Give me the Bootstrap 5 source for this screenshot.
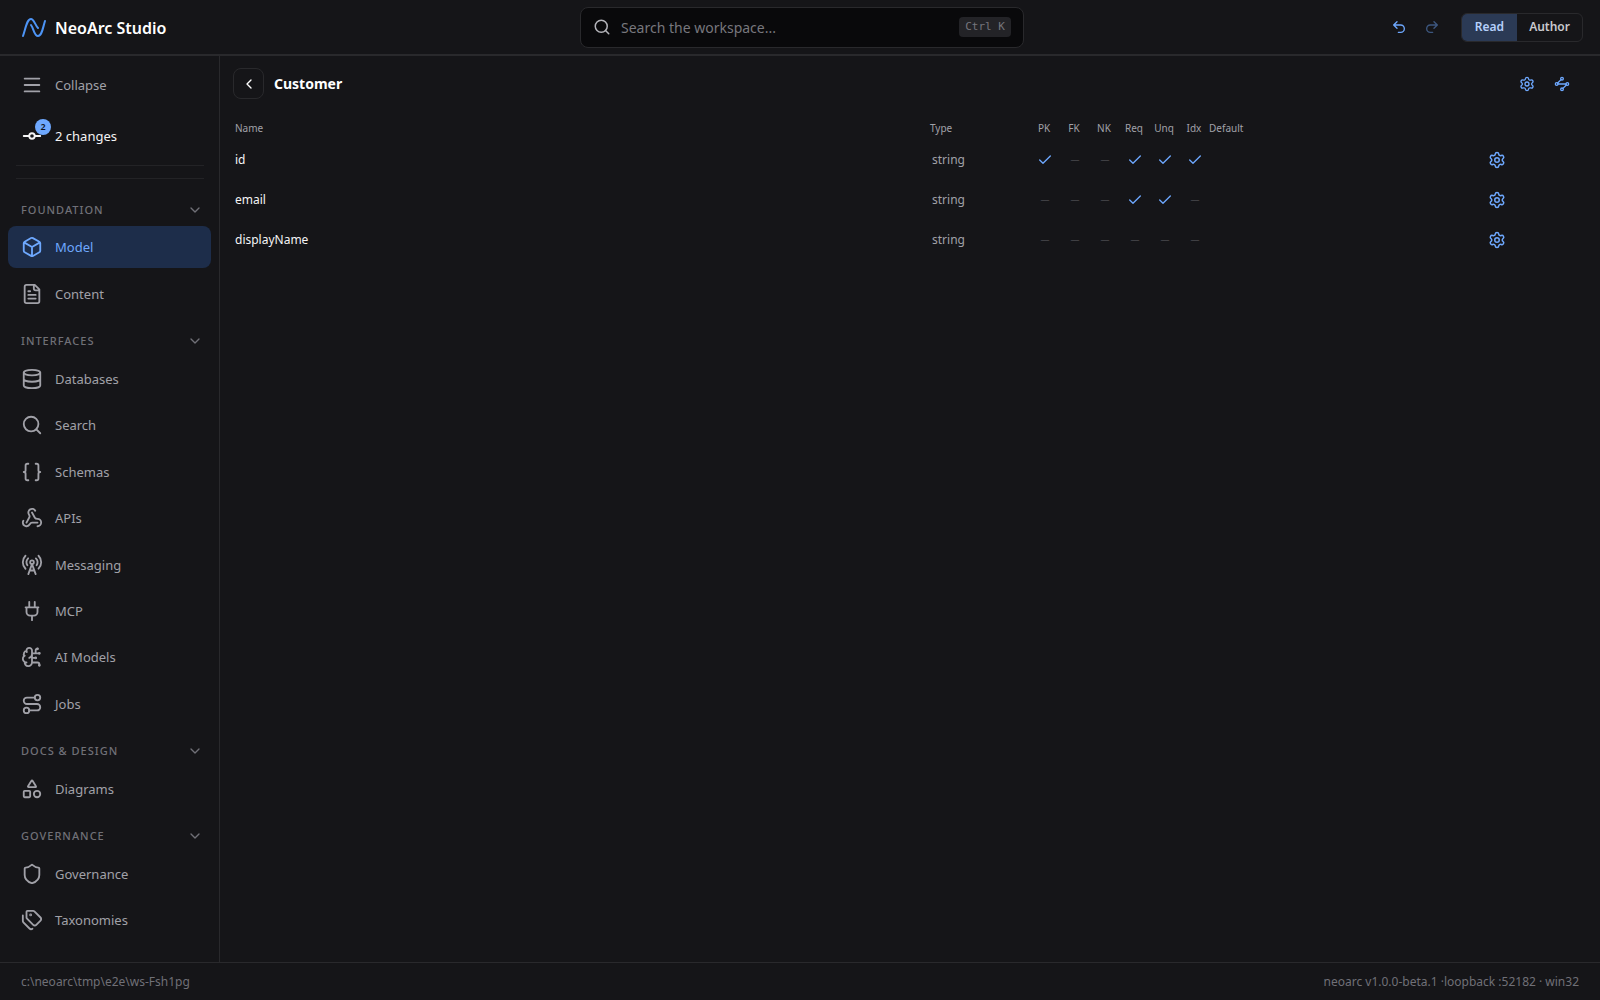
<!DOCTYPE html>
<html lang="en" data-bs-theme="dark">
<head>
<meta charset="utf-8">
<meta name="viewport" content="width=device-width, initial-scale=1">
<title>NeoArc Studio</title>
<link href="https://cdn.jsdelivr.net/npm/bootstrap@5.3.0/dist/css/bootstrap.min.css" rel="stylesheet">
<style>
:root{--ink:#f4f4f5;--muted:#a1a1a8;--dim:#707077;--line:#29292c;--accent:#6ea8fe;--panel:#151518}
body{font-family:"Noto Sans","Open Sans",sans-serif;font-size:13px;line-height:18px;background:var(--panel);color:var(--ink)}
svg{fill:none;stroke:currentColor;stroke-width:2;stroke-linecap:round;stroke-linejoin:round;flex:none;display:block}
.i22{width:22px;height:22px}.i18{width:18px;height:18px}.i16{width:16px;height:16px}
.logo{color:#4d94f5}
.topbar{height:56px;border-bottom:2px solid var(--line);padding:0 17px 0 21px;display:grid;grid-template-columns:1fr 444px 1fr}
.brand-name{font-size:16px;line-height:22px;padding-top:2px;font-weight:600;color:#fff}
.searchbox{height:41px;background:#09090b;border:1px solid var(--line);border-radius:8px;padding:0 12px;color:#b4b4ba}
.searchbox input{background:none;border:0;outline:0;min-width:0;color:var(--ink);font-size:14px;padding:2px 0 0;margin-left:10px}
.searchbox input::placeholder{color:#77777d;opacity:1}
.keys{font:11px/20px "DejaVu Sans Mono",monospace;background:#232327;color:#75757c;border-radius:4px;padding:0 6px}
.tool{background:none;border:0;padding:0;color:var(--accent)}
.tool:disabled{opacity:.45}
.history{gap:17px;margin-right:21px}
.pagetools{gap:19px;margin-right:18px}
.modes{border:1px solid var(--line);border-radius:6px;overflow:hidden;height:29px}
.modes button{border:0;background:none;font-size:12px;font-weight:600;color:#c9c9ce;padding:0 12px}
.modes button.on{background:#2b3a55;color:#b5d0fb;padding:0 13px}
.side{width:220px;border-right:1px solid var(--line);padding:8px 8px 21px}
.side-item{height:42px;width:100%;border:0;background:none;border-radius:8px;padding:0 13px;display:flex;align-items:center;gap:12px;color:var(--muted);text-decoration:none}
.side-item.on{background:#1d2d4a;color:var(--accent)}
.side-item.changed{color:var(--ink);margin-top:9px}
.side-head{height:34px;width:100%;border:0;background:none;padding:13px 8px 3px 13px;color:var(--dim);font-size:11px;line-height:18px;letter-spacing:1px;font-weight:500}
.rules{height:14px;margin:8px 7px 9px 8px;border:solid #232326;border-width:1px 0}
.count{position:absolute;top:-6px;right:-8px;width:16px;height:16px;border-radius:8px;background:var(--accent);color:#10131a;font-size:9px;line-height:16px;font-weight:600;text-align:center}
.work{padding:12px 12px 0 13px}
.back{width:31px;height:31px;border:1px solid var(--line);border-radius:8px;background:none;color:#fff}
.work h1{font-size:14px;line-height:20px;font-weight:700;color:#fff;margin:0 0 0 10px}
.fields{table-layout:fixed;width:100%;margin-top:17px}
.fields th{height:24px;font-size:10px;line-height:14px;font-weight:400;color:var(--muted);padding:0 2px}
.fields td{height:40px;padding:0 2px;font-size:12px}
.fields .default{padding:0}
.fields .kind{padding-left:4px;color:var(--muted)}
.fields .flag{text-align:center;padding:0 0 0 2px;color:#606066;font-size:9px}
.fields .flag svg{margin:auto;color:var(--accent)}
.c-type{width:101px}.c-flag{width:30px}.c-default{width:273px}.c-act{width:106px}
.status{height:38px;border-top:1px solid var(--line);padding:0 21px;font-size:12px;color:var(--dim)}
</style>
<script src="https://cdn.jsdelivr.net/npm/bootstrap@5.3.0/dist/js/bootstrap.bundle.min.js"></script>
</head>
<body class="d-flex flex-column min-vh-100">
<svg class="d-none" aria-hidden="true">
<symbol id="gear" viewBox="0 0 24 24"><path d="M9.671 4.136a2.34 2.34 0 0 1 4.659 0 2.34 2.34 0 0 0 3.319 1.915 2.34 2.34 0 0 1 2.33 4.033 2.34 2.34 0 0 0 0 3.831 2.34 2.34 0 0 1-2.33 4.033 2.34 2.34 0 0 0-3.319 1.915 2.34 2.34 0 0 1-4.659 0 2.34 2.34 0 0 0-3.32-1.915 2.34 2.34 0 0 1-2.33-4.033 2.34 2.34 0 0 0 0-3.831A2.34 2.34 0 0 1 6.35 6.051a2.34 2.34 0 0 0 3.319-1.915"/><circle cx="12" cy="12" r="3"/></symbol>
<symbol id="down" viewBox="0 0 24 24"><path d="m6 9 6 6 6-6"/></symbol>
<symbol id="tick" viewBox="0 0 24 24"><path d="M20 6 9 17l-5-5"/></symbol>
<symbol id="lens" viewBox="0 0 24 24"><path d="m21 21-4.300-4.300"/><circle cx="11" cy="11" r="8"/></symbol>
</svg>
<header class="topbar align-items-center">
  <div class="d-flex align-items-center gap-2">
    <svg class="logo" width="26" height="24" viewBox="0 0 26 24"><path d="M2 21C5 12 6 4 10 4c3 0 4 6 7 9M10 10c3 4 3 11 7 11s5-9 7-15"/></svg>
    <span class="brand-name">NeoArc Studio</span>
  </div>
  <label class="searchbox d-flex align-items-center">
    <svg class="i18"><use href="#lens"/></svg>
    <input class="flex-grow-1" type="search" placeholder="Search the workspace..." aria-label="Search the workspace">
    <span class="keys">Ctrl K</span>
  </label>
  <div class="d-flex align-items-center justify-content-end">
    <div class="history d-flex">
      <button class="tool" aria-label="Undo"><svg class="i16" viewBox="0 0 24 24"><path d="M9 14 4 9l5-5M4 9h10.500a5.500 5.500 0 0 1 0 11H11"/></svg></button>
      <button class="tool" aria-label="Redo" disabled><svg class="i16" viewBox="0 0 24 24"><path d="m15 14 5-5-5-5M20 9H9.500a5.500 5.500 0 0 0 0 11H13"/></svg></button>
    </div>
    <div class="modes d-flex" role="group" aria-label="Mode"><button class="on">Read</button><button>Author</button></div>
  </div>
</header>
<div class="d-flex flex-grow-1">
  <nav class="side d-flex flex-column flex-shrink-0" aria-label="Workspace">
    <button class="side-item"><svg class="i22" viewBox="0 0 24 24"><path d="M4 5h16M4 12h16M4 19h16"/></svg>Collapse</button>
    <a class="side-item changed" href="#"><span class="position-relative"><svg class="i22" viewBox="0 0 24 24"><circle cx="12" cy="12" r="3"/><path d="M3 12h6M15 12h6"/></svg><span class="count">2</span></span>2 changes</a>
    <div class="rules"></div>
    <div class="d-flex flex-column flex-grow-1 justify-content-between">
      <button class="side-head d-flex justify-content-between align-items-center">FOUNDATION<svg class="i16"><use href="#down"/></svg></button>
      <a class="side-item on" href="#" aria-current="page"><svg class="i22" viewBox="0 0 24 24"><path d="M21 8a2 2 0 0 0-1-1.730l-7-4a2 2 0 0 0-2 0l-7 4A2 2 0 0 0 3 8v8a2 2 0 0 0 1 1.730l7 4a2 2 0 0 0 2 0l7-4A2 2 0 0 0 21 16ZM3.300 7l8.700 5 8.700-5M12 22V12"/></svg>Model</a>
      <a class="side-item" href="#"><svg class="i22" viewBox="0 0 24 24"><path d="M15 2H6a2 2 0 0 0-2 2v16a2 2 0 0 0 2 2h12a2 2 0 0 0 2-2V7ZM14 2v4a2 2 0 0 0 2 2h4M10 9H8M16 13H8M16 17H8"/></svg>Content</a>
      <button class="side-head d-flex justify-content-between align-items-center">INTERFACES<svg class="i16"><use href="#down"/></svg></button>
      <a class="side-item" href="#"><svg class="i22" viewBox="0 0 24 24"><ellipse cx="12" cy="5" rx="9" ry="3"/><path d="M3 5v14a9 3 0 0 0 18 0V5M3 12a9 3 0 0 0 18 0"/></svg>Databases</a>
      <a class="side-item" href="#"><svg class="i22"><use href="#lens"/></svg>Search</a>
      <a class="side-item" href="#"><svg class="i22" viewBox="0 0 24 24"><path d="M8 3H7a2 2 0 0 0-2 2v5a2 2 0 0 1-2 2 2 2 0 0 1 2 2v5a2 2 0 0 0 2 2h1M16 21h1a2 2 0 0 0 2-2v-5a2 2 0 0 1 2-2 2 2 0 0 1-2-2V5a2 2 0 0 0-2-2h-1"/></svg>Schemas</a>
      <a class="side-item" href="#"><svg class="i22" viewBox="0 0 24 24"><path d="M18 16.980h-5.990c-1.100 0-1.950.940-2.480 1.900A4 4 0 0 1 2 17c.010-.700.200-1.400.570-2M6 17l3.130-5.780c.530-.970.100-2.180-.500-3.100a4 4 0 1 1 6.890-4.060M12 6l3.130 5.730C15.660 12.700 16.900 13 18 13a4 4 0 0 1 0 8"/></svg>APIs</a>
      <a class="side-item" href="#"><svg class="i22" viewBox="0 0 24 24"><path d="M4.900 16.100C1 12.200 1 5.800 4.900 1.900M7.800 4.700a6.140 6.140 0 0 0-.800 7.500M16.200 4.800c2 2 2.260 5.110.800 7.470M19.100 1.900a9.960 9.960 0 0 1 0 14.100M9.500 18h5M8 22l4-11 4 11"/><circle cx="12" cy="9" r="2"/></svg>Messaging</a>
      <a class="side-item" href="#"><svg class="i22" viewBox="0 0 24 24"><path d="M12 22v-5M9 8V2M15 8V2M18 8v5a4 4 0 0 1-4 4h-4a4 4 0 0 1-4-4V8ZM5 8h14"/></svg>MCP</a>
      <a class="side-item" href="#"><svg class="i22" viewBox="0 0 24 24"><path d="M12 5a3 3 0 1 0-5.997.125 4 4 0 0 0-2.526 5.770 4 4 0 0 0 .556 6.588A4 4 0 1 0 12 18ZM9 13a4.500 4.500 0 0 0 3-4M6.003 5.125A3 3 0 0 0 6.401 6.500M3.477 10.896a4 4 0 0 1 .585-.396M6 18a4 4 0 0 1-1.967-.516M12 13h4M12 18h6a2 2 0 0 1 2 2v1M12 8h8M16 8V5a2 2 0 0 1 2-2"/><circle cx="16" cy="13" r=".5"/><circle cx="18" cy="3" r=".5"/><circle cx="20" cy="21" r=".5"/><circle cx="20" cy="8" r=".5"/></svg>AI Models</a>
      <a class="side-item" href="#"><svg class="i22" viewBox="0 0 24 24"><circle cx="6" cy="19" r="3"/><path d="M9 19h8.500a3.500 3.500 0 0 0 0-7h-11a3.500 3.500 0 0 1 0-7H15"/><circle cx="18" cy="5" r="3"/></svg>Jobs</a>
      <button class="side-head d-flex justify-content-between align-items-center">DOCS &amp; DESIGN<svg class="i16"><use href="#down"/></svg></button>
      <a class="side-item" href="#"><svg class="i22" viewBox="0 0 24 24"><path d="M8.300 10a.7.7 0 0 1-.626-1.079L11.400 3a.7.7 0 0 1 1.198-.043L16.300 8.900a.7.7 0 0 1-.572 1.100Z"/><rect x="3" y="14" width="7" height="7" rx="1"/><circle cx="17.500" cy="17.500" r="3.500"/></svg>Diagrams</a>
      <button class="side-head d-flex justify-content-between align-items-center">GOVERNANCE<svg class="i16"><use href="#down"/></svg></button>
      <a class="side-item" href="#"><svg class="i22" viewBox="0 0 24 24"><path d="M20 13c0 5-3.500 7.500-7.660 8.950a1 1 0 0 1-.670-.010C7.500 20.500 4 18 4 13V6a1 1 0 0 1 1-1c2 0 4.500-1.200 6.240-2.720a1.170 1.170 0 0 1 1.520 0C14.510 3.810 17 5 19 5a1 1 0 0 1 1 1z"/></svg>Governance</a>
      <a class="side-item" href="#"><svg class="i22" viewBox="0 0 24 24"><path d="M13.172 2a2 2 0 0 1 1.414.586l6.710 6.710a2.400 2.400 0 0 1 0 3.408l-4.592 4.592a2.400 2.400 0 0 1-3.408 0l-6.710-6.710A2 2 0 0 1 6 9.172V3a1 1 0 0 1 1-1zM2 7v6.172a2 2 0 0 0 .586 1.414l6.710 6.710a2.400 2.400 0 0 0 3.191.193"/><circle cx="10.500" cy="6.500" r=".5" fill="currentColor"/></svg>Taxonomies</a>
    </div>
  </nav>
  <main class="work flex-grow-1">
    <div class="d-flex align-items-center">
      <button class="back d-flex align-items-center justify-content-center p-0" aria-label="Back"><svg class="i16" viewBox="0 0 24 24"><path d="m15 18-6-6 6-6"/></svg></button>
      <h1 class="flex-grow-1">Customer</h1>
      <div class="pagetools d-flex">
        <button class="tool" aria-label="Entity settings"><svg class="i16"><use href="#gear"/></svg></button>
        <button class="tool" aria-label="Relationships"><svg class="i16" viewBox="0 0 24 24"><path d="m10.586 5.414-5.172 5.172M18.586 13.414l-5.172 5.172M6 12h12"/><circle cx="12" cy="20" r="2"/><circle cx="12" cy="4" r="2"/><circle cx="20" cy="12" r="2"/><circle cx="4" cy="12" r="2"/></svg></button>
      </div>
    </div>
    <table class="fields">
      <colgroup><col><col class="c-type"><col class="c-flag"><col class="c-flag"><col class="c-flag"><col class="c-flag"><col class="c-flag"><col class="c-flag"><col class="c-default"><col class="c-act"></colgroup>
      <thead><tr><th>Name</th><th>Type</th><th class="text-center">PK</th><th class="text-center">FK</th><th class="text-center">NK</th><th class="text-center">Req</th><th class="text-center">Unq</th><th class="text-center">Idx</th><th class="default">Default</th><th></th></tr></thead>
      <tbody>
        <tr><td>id</td><td class="kind">string</td><td class="flag"><svg class="i16"><use href="#tick"/></svg></td><td class="flag">—</td><td class="flag">—</td><td class="flag"><svg class="i16"><use href="#tick"/></svg></td><td class="flag"><svg class="i16"><use href="#tick"/></svg></td><td class="flag"><svg class="i16"><use href="#tick"/></svg></td><td></td><td><button class="tool d-block ms-1" aria-label="Settings for id"><svg class="i18"><use href="#gear"/></svg></button></td></tr>
        <tr><td>email</td><td class="kind">string</td><td class="flag">—</td><td class="flag">—</td><td class="flag">—</td><td class="flag"><svg class="i16"><use href="#tick"/></svg></td><td class="flag"><svg class="i16"><use href="#tick"/></svg></td><td class="flag">—</td><td></td><td><button class="tool d-block ms-1" aria-label="Settings for email"><svg class="i18"><use href="#gear"/></svg></button></td></tr>
        <tr><td>displayName</td><td class="kind">string</td><td class="flag">—</td><td class="flag">—</td><td class="flag">—</td><td class="flag">—</td><td class="flag">—</td><td class="flag">—</td><td></td><td><button class="tool d-block ms-1" aria-label="Settings for displayName"><svg class="i18"><use href="#gear"/></svg></button></td></tr>
      </tbody>
    </table>
  </main>
</div>
<footer class="status d-flex align-items-center justify-content-between"><span>c:\neoarc\tmp\e2e\ws-Fsh1pg</span><span>neoarc v1.0.0-beta.1 ·loopback :52182 · win32</span></footer>
</body>
</html>
